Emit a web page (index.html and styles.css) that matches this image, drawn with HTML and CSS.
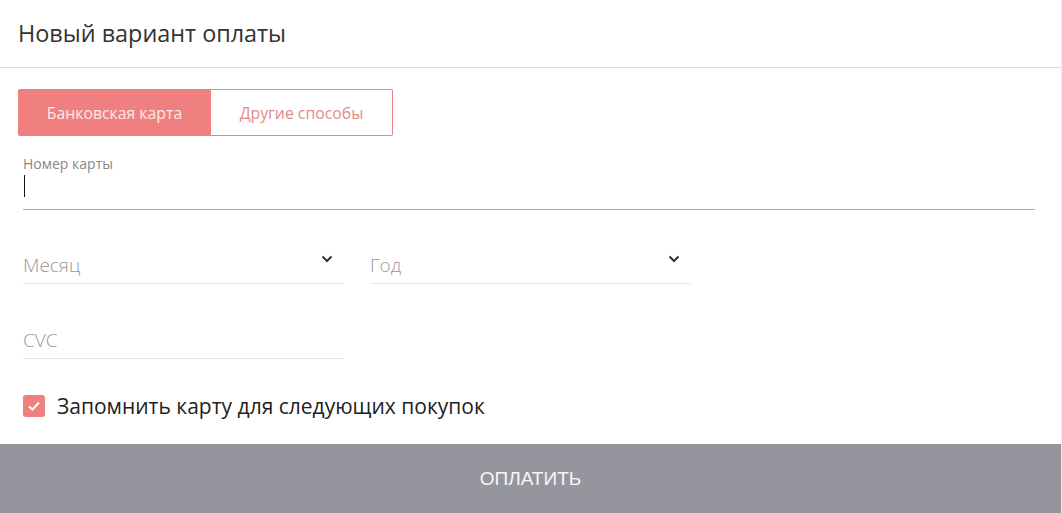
FILE: index.html
```html
<!DOCTYPE html>
<html lang="ru">
<head>
    <meta charset="UTF-8">
    <meta name="viewport" content="width=device-width, initial-scale=1.0">
    <title>Новый вариант оплаты</title>
    <link rel="stylesheet" href="styles.css">
</head>
<body>
    <div class="modal">
        <div class="modal-header">
            <h2>Новый вариант оплаты</h2>
        </div>
        <div class="modal-body">
            <div class="tabs">
                <button type="button" class="tab active">Банковская карта</button>
                <button type="button" class="tab">Другие способы</button>
            </div>

            <!-- Card number -->
            <div class="field card-field">
                <label for="cardNumber">Номер карты</label>
                <div class="card-input"><span class="caret"></span></div>
            </div>

            <!-- Expiry -->
            <div class="row expiry-row">
                <div class="field select-field">
                    <span class="placeholder">Месяц</span>
                    <svg class="chevron" width="12" height="8" viewBox="0 0 12 8"><path d="M1.5 1.5 L6 6 L10.5 1.5" fill="none" stroke="#333" stroke-width="2"/></svg>
                </div>
                <div class="field select-field">
                    <span class="placeholder">Год</span>
                    <svg class="chevron" width="12" height="8" viewBox="0 0 12 8"><path d="M1.5 1.5 L6 6 L10.5 1.5" fill="none" stroke="#333" stroke-width="2"/></svg>
                </div>
            </div>

            <div class="row cvc-row">
                <div class="field select-field">
                    <span class="placeholder">CVC</span>
                </div>
            </div>

            <label class="remember">
                <span class="checkbox">
                    <svg width="14" height="12" viewBox="0 0 14 12"><path d="M2 6.5 L5.5 9.5 L12 2.5" fill="none" stroke="#fff" stroke-width="2"/></svg>
                </span>
                Запомнить карту для следующих покупок
            </label>
        </div>
        <button type="button" class="pay-btn">ОПЛАТИТЬ</button>
    </div>
</body>
</html>
```
FILE: styles.css
```css
/* Reset some default styles */
body, h2, button {
    margin: 0;
    padding: 0;
    box-sizing: border-box;
}

body {
    font-family: "Open Sans", sans-serif;
    background-color: #ffffff;
    height: 100vh;
    overflow: hidden;
}

.modal {
    display: flex;
    flex-direction: column;
    height: 513px;
    border-right: 1px solid #eeeeee;
}

.modal-header {
    height: 67px;
    padding: 0 18px;
    border-bottom: 1px solid #dddddd;
    display: flex;
    align-items: center;
}

.modal-header h2 {
    font-size: 23.4px;
    font-weight: 400;
    color: #333;
    margin-top: -1px;
}

.modal-body {
    flex: 1;
    padding: 21px 26px 0 18px;
}

.tabs {
    display: flex;
    height: 47px;
}

.tab {
    font-family: "Open Sans", sans-serif;
    font-size: 15.8px;
    border: 1px solid #ee8080;
    background-color: #fff;
    color: #e28a8a;
    border-radius: 2px;
    cursor: pointer;
}

.tab.active {
    width: 193px;
    background-color: #f08080;
    color: #fde8e8;
    border-radius: 2px 0 0 2px;
}

.tab:not(.active) {
    width: 182px;
    border-left: none;
    border-radius: 0 2px 2px 0;
}

.field {
    margin-left: 5px;
}

.card-field {
    margin-top: 18px;
}

.card-field label {
    display: block;
    font-size: 14px;
    color: #888;
    line-height: 20px;
}

.card-input {
    height: 34px;
    border-bottom: 1px solid #e0959b;
    padding-top: 1px;
}

.caret {
    display: block;
    width: 1px;
    height: 22px;
    margin-left: 1px;
    background-color: #111;
}

.row {
    display: flex;
    gap: 26px;
}

.expiry-row {
    margin-top: 25px;
}

.cvc-row {
    margin-top: 26px;
}

.select-field {
    width: 321px;
    height: 49px;
    border-bottom: 1px solid #e6e6e6;
    display: flex;
    align-items: flex-end;
    justify-content: space-between;
    padding-bottom: 6px;
    box-sizing: border-box;
}

.select-field + .select-field {
    margin-left: 0;
}

.placeholder {
    font-size: 19px;
    color: #999;
    font-weight: 300;
    line-height: 24px;
}

.chevron {
    margin: 0 11px 14px 0;
}

.remember {
    display: flex;
    align-items: center;
    gap: 12px;
    margin: 33px 0 0 5px;
    font-size: 21px;
    color: #222;
}

.checkbox {
    width: 22px;
    height: 22px;
    border-radius: 3px;
    background-color: #f08080;
    display: flex;
    align-items: center;
    justify-content: center;
}

.pay-btn {
    height: 69px;
    width: 100%;
    background-color: #94959d;
    color: #f6f6f8;
    border: none;
    font-family: "Liberation Sans", Arial, sans-serif;
    font-size: 19px;
    cursor: pointer;
}
```
